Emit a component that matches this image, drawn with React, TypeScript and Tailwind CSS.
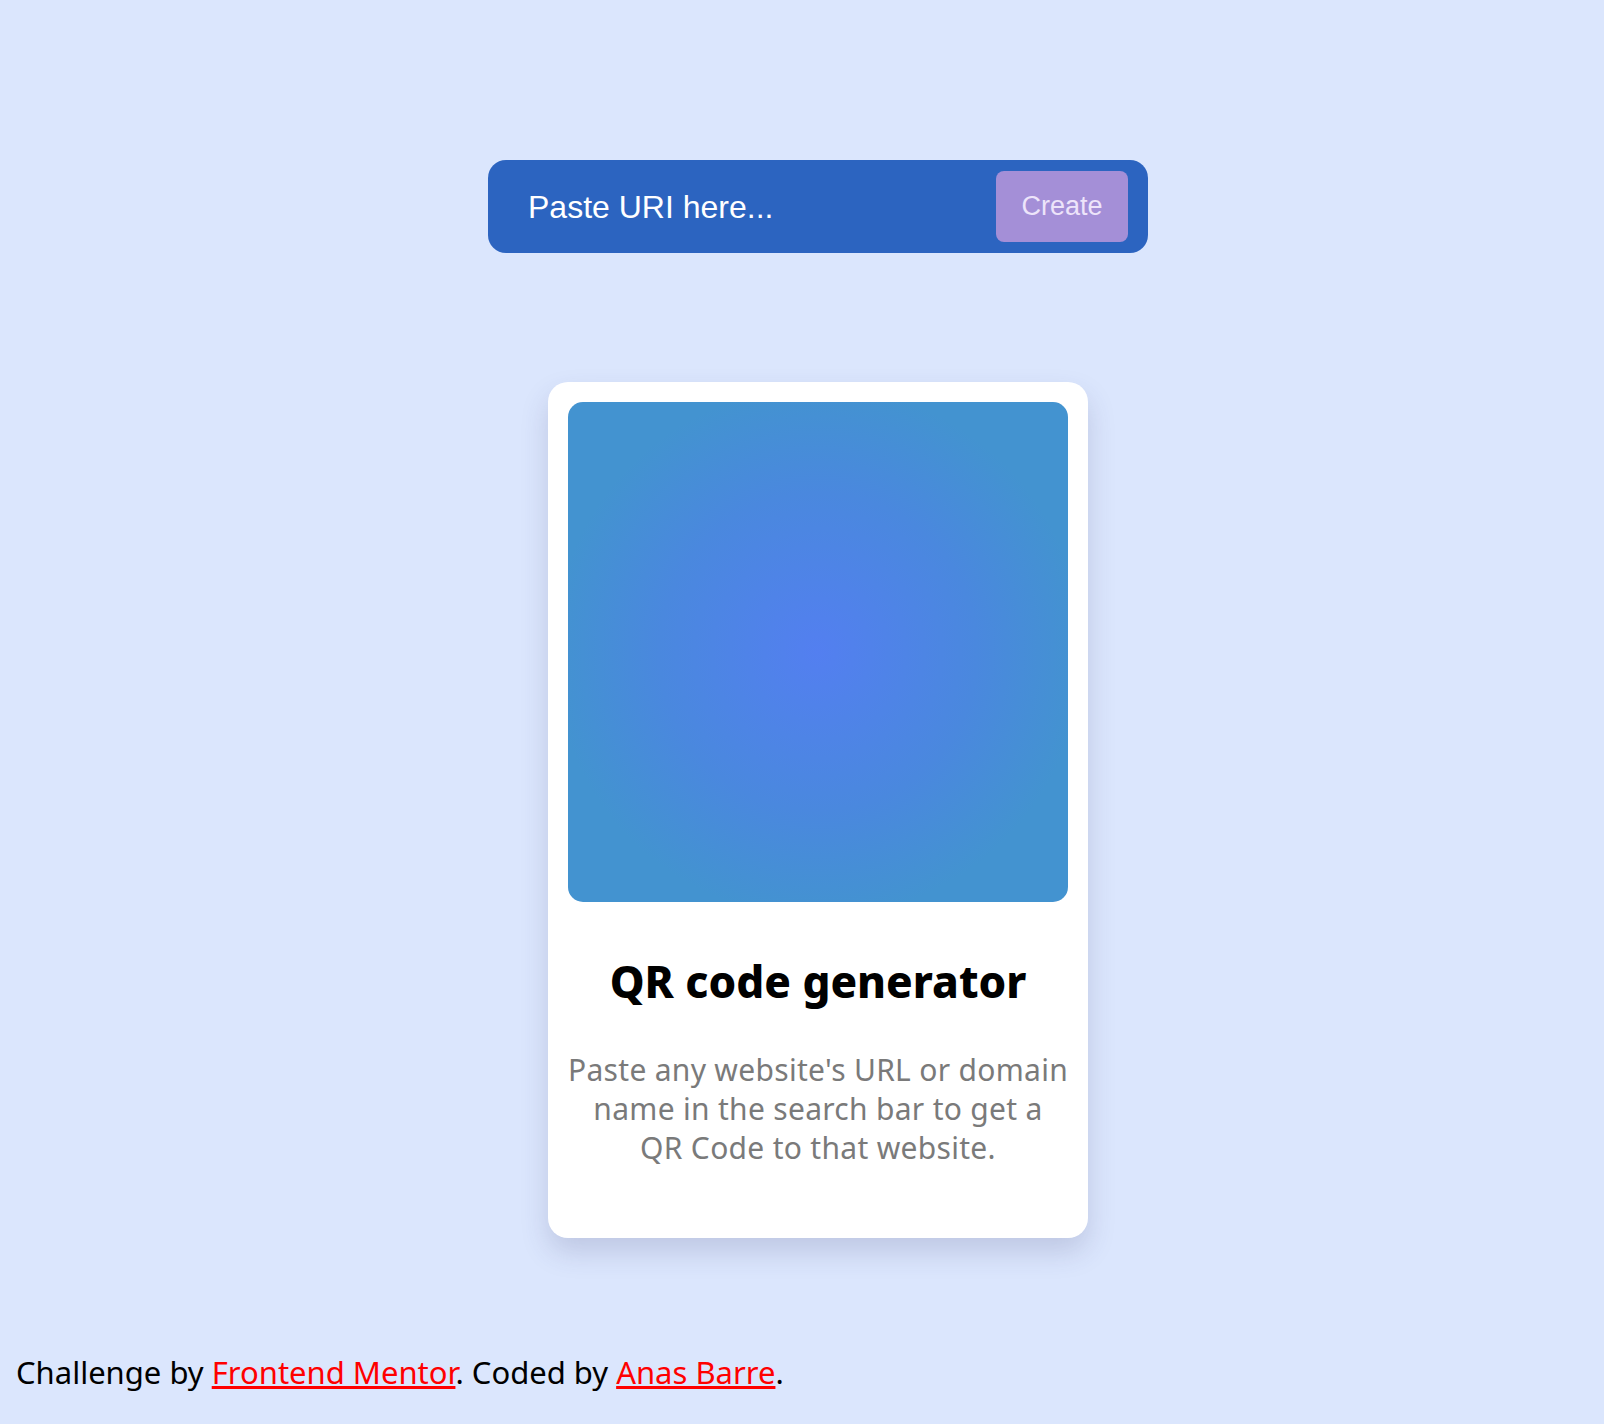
import React from 'react';

const rounded = { fontFamily: '"Noto Sans", Lato, sans-serif' };

const SearchBar: React.FC = () => (
  <div className="flex items-center justify-between w-[660px] h-[93px] bg-[#2c64c0] rounded-[18px] pl-10 pr-5">
    <input
      type="text"
      placeholder="Paste URI here..."
      className="flex-1 min-w-0 bg-transparent outline-none text-[32px] text-white placeholder:text-white"
      style={{ fontFamily: '"Liberation Sans", Arial, sans-serif' }}
    />
    <button
      className="w-[132px] h-[71px] rounded-[8px] bg-[#a48fd7] text-[#ede4fa] text-[27px]"
      style={{ fontFamily: '"Liberation Sans", Arial, sans-serif' }}
    >
      Create
    </button>
  </div>
);

const QrCard: React.FC = () => (
  <div className="w-[540px] bg-white rounded-[20px] p-5 pb-[71px] shadow-[0_14px_28px_rgba(60,60,110,0.18)]">
    <div className="w-[500px] h-[500px] rounded-[15px] bg-[radial-gradient(circle_at_center,#537ff0_0%,#4a88de_45%,#4393d0_75%)]" />
    <h1 className="mt-[52px] text-center text-[44px] font-extrabold text-black leading-tight" style={rounded}>
      QR code generator
    </h1>
    <p className="mt-[41px] text-center text-[30px] leading-[39px] tracking-[0.3px] text-[#7a7a7a]" style={rounded}>
      Paste any website's URL or domain name in the search bar to get a QR Code to that website.
    </p>
  </div>
);

export default function App() {
  return (
    <div className="min-h-[1424px] bg-[#dbe6fd] flex flex-col items-center pl-8">
      <div className="mt-[160px]">
        <SearchBar />
      </div>
      <div className="mt-[129px]">
        <QrCard />
      </div>
      <footer className="self-start -ml-4 mt-[111px] text-[31px] text-black" style={rounded}>
        Challenge by{' '}
        <a href="#" className="text-[#ff0000] underline">Frontend Mentor</a>. Coded by{' '}
        <a href="#" className="text-[#ff0000] underline">Anas Barre</a>.
      </footer>
    </div>
  );
}
